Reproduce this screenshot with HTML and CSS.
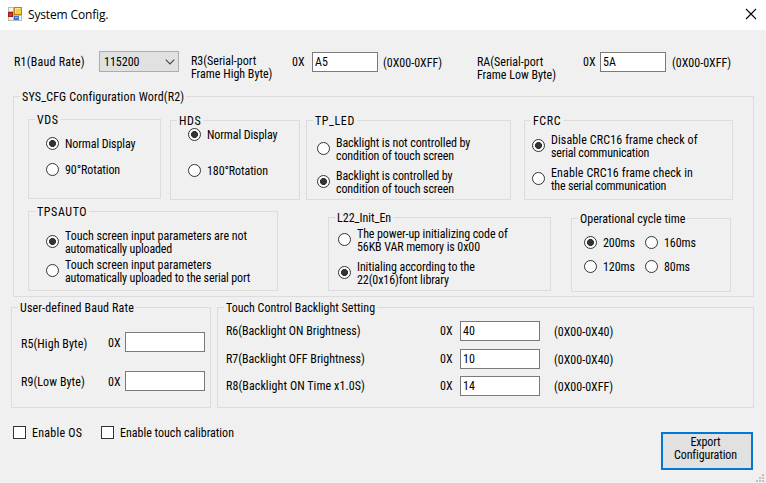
FILE: index.html
```html
<!DOCTYPE html>
<html lang="en">
<head>
<meta charset="utf-8">
<title>System Config.</title>
<link rel="stylesheet" href="styles.css">
</head>
<body>
<div class="window">
  <header class="titlebar">
    <svg class="app-icon" width="14" height="14" viewBox="0 0 14 14">
      <rect width="14" height="14" fill="#b9b9b9"/>
      <path d="M1 1h4v3H1zM1 10h4v3H1zM6 9h7v4H6z" fill="#f4f4f4"/>
      <rect x="6" y="0" width="8" height="8" fill="#b8860b"/>
      <rect x="7" y="1" width="6" height="6" fill="#f7cd45"/>
      <path d="M7 1h5v1H8v4H7z" fill="#fde890"/>
      <rect x="0" y="5" width="5" height="5" fill="#a01c12"/>
      <rect x="1" y="6" width="3" height="3" fill="#c93a2c"/>
      <rect x="6" y="9" width="5" height="4" fill="#3c78d8"/>
      <rect x="7" y="10" width="3" height="1" fill="#8cb8f4"/>
    </svg>
    <h1 class="title">System Config.</h1>
    <svg class="close" width="10" height="10" viewBox="0 0 10 10"><path d="M0 0L10 10M10 0L0 10" stroke="#000" stroke-width="1.1"/></svg>
  </header>

  <section class="serial">
    <span class="lbl r1">R1(Baud Rate)</span>
    <div class="combo"><span>115200</span><svg width="10" height="6" viewBox="0 0 10 6"><path d="M.7.7L5 5L9.3.7" fill="none" stroke="#444" stroke-width="1.1"/></svg></div>
    <span class="lbl r3">R3(Serial-port<br>Frame High Byte)</span>
    <span class="lbl hex">0X</span>
    <div class="input short">A5</div>
    <span class="lbl range">(0X00-0XFF)</span>
    <span class="lbl ra">RA(Serial-port<br>Frame Low Byte)</span>
    <span class="lbl hex">0X</span>
    <div class="input short">5A</div>
    <span class="lbl range range-b">(0X00-0XFF)</span>
  </section>

  <section class="group config">
    <h2 class="legend">SYS_CFG Configuration Word(R2)</h2>
    <div class="row top-row">
      <div class="group vds">
        <h3 class="legend caps">VDS</h3>
        <div class="options">
          <div class="option"><i class="radio on"></i><span>Normal Display</span></div>
          <div class="option"><i class="radio"></i><span>90°Rotation</span></div>
        </div>
      </div>
      <div class="group hds">
        <h3 class="legend caps">HDS</h3>
        <div class="options">
          <div class="option"><i class="radio on"></i><span>Normal Display</span></div>
          <div class="option"><i class="radio"></i><span>180°Rotation</span></div>
        </div>
      </div>
      <div class="group tpled">
        <h3 class="legend caps">TP_LED</h3>
        <div class="options two-line">
          <div class="option"><i class="radio"></i><span>Backlight is not controlled by<br>condition of touch screen</span></div>
          <div class="option"><i class="radio on"></i><span>Backlight is controlled by<br>condition of touch screen</span></div>
        </div>
      </div>
      <div class="group fcrc">
        <h3 class="legend caps">FCRC</h3>
        <div class="options two-line">
          <div class="option"><i class="radio on"></i><span><b class="loose">Disable CRC16 frame check of</b><br>serial communication</span></div>
          <div class="option"><i class="radio"></i><span><b class="loose">Enable CRC16 frame check in</b><br>the serial communication</span></div>
        </div>
      </div>
    </div>
    <div class="row bottom-row">
      <div class="group tpsauto">
        <h3 class="legend caps">TPSAUTO</h3>
        <div class="options two-line">
          <div class="option"><i class="radio on"></i><span><b class="normal">Touch screen input parameters are not</b><br>automatically uploaded</span></div>
          <div class="option"><i class="radio"></i><span><b class="normal">Touch screen input parameters</b><br>automatically uploaded to the serial port</span></div>
        </div>
      </div>
      <div class="group l22">
        <h3 class="legend">L22_Init_En</h3>
        <div class="options two-line">
          <div class="option"><i class="radio"></i><span>The power-up initializing code of<br>56KB VAR memory is 0x00</span></div>
          <div class="option"><i class="radio on"></i><span>Initialing according to the<br>22(0x16)font library</span></div>
        </div>
      </div>
      <div class="group cycle">
        <h3 class="legend">Operational cycle time</h3>
        <div class="options grid">
          <div class="option"><i class="radio on"></i><span>200ms</span></div>
          <div class="option"><i class="radio"></i><span>160ms</span></div>
          <div class="option"><i class="radio"></i><span>120ms</span></div>
          <div class="option"><i class="radio"></i><span>80ms</span></div>
        </div>
      </div>
    </div>
  </section>

  <div class="row settings">
    <section class="group baud">
      <h2 class="legend">User-defined Baud Rate</h2>
      <div class="fields">
        <div class="field"><span class="name drop">R5(High Byte)</span><span class="prefix">0X</span><div class="input"></div></div>
        <div class="field"><span class="name">R9(Low Byte)</span><span class="prefix">0X</span><div class="input"></div></div>
      </div>
    </section>
    <section class="group backlight">
      <h2 class="legend">Touch Control Backlight Setting</h2>
      <div class="fields">
        <div class="field"><span class="name">R6(Backlight ON Brightness)</span><span class="prefix">0X</span><div class="input">40</div><span class="limits">(0X00-0X40)</span></div>
        <div class="field"><span class="name">R7(Backlight OFF Brightness)</span><span class="prefix">0X</span><div class="input">10</div><span class="limits">(0X00-0X40)</span></div>
        <div class="field"><span class="name">R8(Backlight ON Time x1.0S)</span><span class="prefix">0X</span><div class="input">14</div><span class="limits">(0X00-0XFF)</span></div>
      </div>
    </section>
  </div>

  <footer class="actions">
    <div class="check os"><i class="box"></i><span>Enable OS</span></div>
    <div class="check"><i class="box"></i><span>Enable touch calibration</span></div>
    <button class="export" type="button">Export<br>Configuration</button>
  </footer>
  <svg class="grip" width="8" height="8" viewBox="0 0 8 8"><path d="M6 0h2v2H6zM3 3h2v2H3zM6 3h2v2H6zM0 6h2v2H0zM3 6h2v2H3zM6 6h2v2H6z" fill="#bfbfbf"/></svg>
</div>
</body>
</html>
```
FILE: styles.css
```css
* { box-sizing: border-box; }

body {
  margin: 0;
  background: #f0f0f0;
  color: #000;
  font: 12px/13px Roboto, "Liberation Sans", sans-serif;
  font-stretch: 87.5%;
  white-space: nowrap;
}

.window { position: relative; width: 766px; height: 483px; overflow: hidden; }

.titlebar {
  display: flex;
  height: 30px;
  padding: 7px 10px 0 8px;
  background: #fff;
}
.title {
  flex: 1;
  margin: 0 0 0 6px;
  font: 12px/16px "Open Sans", "Noto Sans", sans-serif;
  letter-spacing: -0.15px;
}
.close { margin-top: 2px; overflow: visible; }

.row { display: flex; align-items: flex-start; }

.serial { display: flex; align-items: flex-start; height: 66px; padding: 21px 0 0 14px; }
.r1 { width: 85px; padding-top: 5px; letter-spacing: 0.22px; }
.combo {
  display: flex;
  justify-content: space-between;
  align-items: center;
  width: 80px;
  height: 21px;
  padding: 0 3px 0 4px;
  border: 1px solid #adadad;
  background: #e1e1e1;
}
.combo span { padding-top: 2px; }
.r3 { width: 101px; margin-left: 12px; padding-top: 4px; }
.ra { width: 106px; padding-top: 5px; }
.hex { width: 20px; padding-top: 5px; }
.ra + .hex { width: 17px; }
.range { width: 94px; margin-left: 5px; padding-top: 6px; }
.range-b { margin-left: 6px; }

.input {
  width: 80px;
  height: 20px;
  padding: 3px 3px 2px 2px;
  border: 1px solid #7a7a7a;
  background: #fff;
}
.input.short { width: 66px; margin-top: 1px; }

.group { border: 1px solid #dcdcdc; }
.legend {
  width: max-content;
  height: 14px;
  margin: -7px 0 -1px 6px;
  padding: 1px 2px 0;
  background: #f0f0f0;
  font: inherit;
}
.config > .legend { letter-spacing: 0.17px; }
.caps { letter-spacing: 0.6px; }
.baud .legend { letter-spacing: 0.14px; }

.config { width: 741px; height: 201px; margin-left: 13px; }
.top-row { margin: 16px 0 0 14px; }
.bottom-row { margin: 11px 0 0 14px; }

.vds { width: 133px; height: 80px; }
.hds { width: 130px; height: 80px; margin: 1px 0 0 9px; }
.tpled { width: 205px; height: 80px; margin: 1px 0 0 6px; }
.fcrc { width: 209px; height: 80px; margin: 1px 0 0 13px; }
.tpsauto { width: 250px; height: 80px; }
.l22 { width: 223px; height: 74px; margin: 6px 0 0 50px; }
.cycle { width: 160px; height: 74px; margin: 7px 0 0 20px; }

.options { display: flex; flex-direction: column; letter-spacing: -0.1px; }
.option { display: flex; gap: 6px; height: 13px; }
.option span { padding-top: 1px; }
.option b { font-weight: 400; }
.loose { letter-spacing: 0.12px; }
.normal { letter-spacing: 0; }
.two-line { gap: 7px; }
.two-line .option { height: 26px; }
.two-line .radio { margin-top: 6px; }

.vds .options { gap: 13px; padding: 11px 0 0 17px; }
.hds .options { gap: 23px; padding: 1px 0 0 17px; }
.tpled .options { padding: 9px 0 0 10px; }
.fcrc .options { padding: 6px 0 0 7px; letter-spacing: -0.2px; }
.tpsauto .options { gap: 3px; padding: 11px 0 0 17px; letter-spacing: -0.15px; }
.l22 .options { padding: 3px 0 0 9px; }
.cycle .options {
  display: grid;
  grid-template-columns: 61px 61px;
  gap: 11px 0;
  padding: 11px 0 0 12px;
}

.radio {
  flex: none;
  width: 13px;
  height: 13px;
  border: 1px solid #333;
  border-radius: 50%;
  background: #fff;
}
.radio.on { background: radial-gradient(circle, #333 3.2px, #fff 3.8px); }

.settings { margin: 10px 0 0 11px; }
.baud { width: 200px; height: 101px; }
.backlight { width: 537px; height: 101px; margin-left: 6px; }
.fields { display: flex; flex-direction: column; }
.field { display: flex; height: 20px; }
.field .name, .field .prefix { padding-top: 4px; }
.field .limits { margin-left: 14px; padding-top: 5px; }
.baud .fields { gap: 19px; padding: 18px 0 0 9px; }
.baud .name { width: 87px; padding-top: 5px; letter-spacing: 0.08px; }
.baud .drop { padding-top: 6px; }
.baud .prefix { width: 17px; padding-top: 5px; }
.backlight .fields { gap: 8px; padding: 7px 0 0 8px; }
.backlight .field:last-child { margin-top: -1px; }
.backlight .field:last-child .name { letter-spacing: 0.08px; }
.backlight .name { width: 214px; }
.backlight .prefix { width: 20px; }

.actions { display: flex; align-items: flex-start; margin: 18px 13px 0; }
.check { display: flex; gap: 6px; }
.check span { padding-top: 1px; }
.os { width: 88px; letter-spacing: 0.25px; }
.box { width: 13px; height: 13px; border: 1px solid #333; background: #fff; }
.export {
  width: 92px;
  height: 38px;
  margin: 6px 0 0 auto;
  padding: 0 3px 4px 0;
  border: 2px solid #0078d7;
  background: #e1e1e1;
  color: #000;
  font: inherit;
  letter-spacing: -0.1px;
}

.grip { position: absolute; right: 2px; bottom: 1px; }
```
